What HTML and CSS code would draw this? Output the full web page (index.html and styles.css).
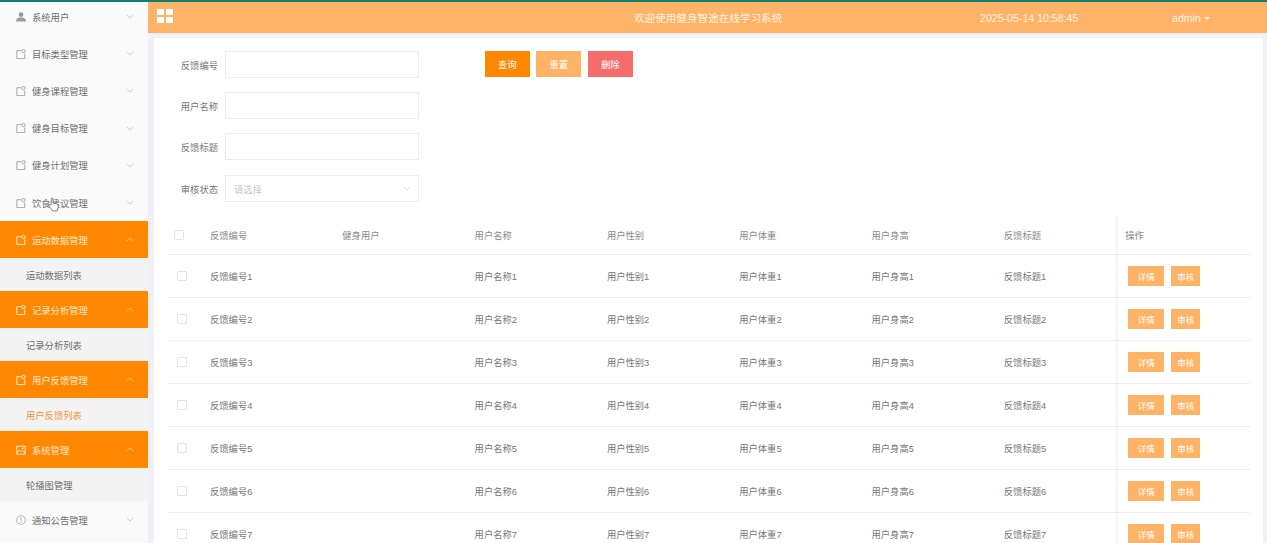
FILE: index.html
```html
<!DOCTYPE html>
<html lang="zh-CN">
<head>
    <meta charset="UTF-8">
    <title>用户反馈列表</title>
    <link rel="stylesheet" href="styles.css">
</head>
<body>
    <svg class="icon-defs" width="0" height="0">
        <symbol id="i-tag" viewBox="0 0 12 12">
            <path d="M6 2H1v9.500h9.500V5.500" fill="none" stroke="currentColor" stroke-width="1"/>
            <circle cx="9" cy="2.500" r="2" fill="none" stroke="currentColor" stroke-width="1"/>
        </symbol>
        <symbol id="i-down" viewBox="0 0 10 6">
            <path d="M1 1l4 4 4-4" fill="none" stroke="currentColor" stroke-width="0.800"/>
        </symbol>
        <symbol id="i-up" viewBox="0 0 10 6">
            <path d="M1 5l4-4 4 4" fill="none" stroke="currentColor" stroke-width="0.900"/>
        </symbol>
    </svg>

    <div class="app">
        <aside class="sidebar">
            <div class="menu-head">
                <svg class="menu-icon" viewBox="0 0 12 12"><circle cx="6" cy="3.200" r="2.800" fill="currentColor"/><path d="M0 11.500c0-3.500 2.500-4.800 6-4.800s6 1.300 6 4.800z" fill="currentColor"/></svg>
                <span>系统用户</span>
                <svg class="chev"><use href="#i-down"/></svg>
            </div>
            <div class="menu-head"><svg class="menu-icon"><use href="#i-tag"/></svg><span>目标类型管理</span><svg class="chev"><use href="#i-down"/></svg></div>
            <div class="menu-head"><svg class="menu-icon"><use href="#i-tag"/></svg><span>健身课程管理</span><svg class="chev"><use href="#i-down"/></svg></div>
            <div class="menu-head"><svg class="menu-icon"><use href="#i-tag"/></svg><span>健身目标管理</span><svg class="chev"><use href="#i-down"/></svg></div>
            <div class="menu-head"><svg class="menu-icon"><use href="#i-tag"/></svg><span>健身计划管理</span><svg class="chev"><use href="#i-down"/></svg></div>
            <div class="menu-head"><svg class="menu-icon"><use href="#i-tag"/></svg><span>饮食建议管理</span><svg class="chev"><use href="#i-down"/></svg></div>

            <div class="menu-head open"><svg class="menu-icon"><use href="#i-tag"/></svg><span>运动数据管理</span><svg class="chev"><use href="#i-up"/></svg></div>
            <div class="menu-sub">运动数据列表</div>
            <div class="menu-head open"><svg class="menu-icon"><use href="#i-tag"/></svg><span>记录分析管理</span><svg class="chev"><use href="#i-up"/></svg></div>
            <div class="menu-sub">记录分析列表</div>
            <div class="menu-head open"><svg class="menu-icon"><use href="#i-tag"/></svg><span>用户反馈管理</span><svg class="chev"><use href="#i-up"/></svg></div>
            <div class="menu-sub current">用户反馈列表</div>
            <div class="menu-head open">
                <svg class="menu-icon" viewBox="0 0 12 12"><rect x="1" y="1.500" width="10" height="9.500" fill="none" stroke="currentColor"/><path d="M1.500 9l2.500-3 2.500 2 1.500-1.500 3 2.500" fill="none" stroke="currentColor"/><circle cx="8" cy="4" r="1" fill="currentColor"/></svg>
                <span>系统管理</span>
                <svg class="chev"><use href="#i-up"/></svg>
            </div>
            <div class="menu-sub">轮播图管理</div>
            <div class="menu-head">
                <svg class="menu-icon" viewBox="0 0 12 12"><circle cx="6" cy="6" r="5.300" fill="none" stroke="currentColor" stroke-width="0.800"/><path d="M6 2.800v4M6 8v1.300" stroke="currentColor" stroke-width="0.900"/></svg>
                <span>通知公告管理</span>
                <svg class="chev"><use href="#i-down"/></svg>
            </div>
        </aside>

        <div class="main">
            <header class="topbar">
                <div class="grid-icon"><i></i><i></i><i></i><i></i></div>
                <div class="site-title">欢迎使用健身智途在线学习系统</div>
                <div class="clock">2025-05-14 10:58:45</div>
                <div class="user">admin <span class="caret"></span></div>
            </header>

            <div class="content">
                <div class="card">
                    <div class="search">
                        <form class="search-form">
                            <div class="form-group"><label>反馈编号</label><input type="text"></div>
                            <div class="form-group"><label>用户名称</label><input type="text"></div>
                            <div class="form-group"><label>反馈标题</label><input type="text"></div>
                            <div class="form-group form-group-select">
                                <label>审核状态</label>
                                <div class="select"><span>请选择</span><svg class="chev"><use href="#i-down"/></svg></div>
                            </div>
                        </form>
                        <div class="search-btns">
                            <button class="btn btn-query">查询</button>
                            <button class="btn btn-reset">重置</button>
                            <button class="btn btn-del">删除</button>
                        </div>
                    </div>

                    <div class="table-wrap">
                        <table class="data-table">
                            <thead>
                                <tr>
                                    <th class="col-check"><span class="check head-check"></span></th>
                                    <th>反馈编号</th><th>健身用户</th><th>用户名称</th><th>用户性别</th><th>用户体重</th><th>用户身高</th><th class="col-title">反馈标题</th>
                                    <th class="col-ops">操作</th>
                                </tr>
                            </thead>
                            <tbody>
                                <tr><td class="col-check"><span class="check"></span></td><td>反馈编号1</td><td></td><td>用户名称1</td><td>用户性别1</td><td>用户体重1</td><td>用户身高1</td><td>反馈标题1</td><td class="col-ops"><button class="mini">详情</button><button class="mini short">审核</button></td></tr>
                                <tr><td class="col-check"><span class="check"></span></td><td>反馈编号2</td><td></td><td>用户名称2</td><td>用户性别2</td><td>用户体重2</td><td>用户身高2</td><td>反馈标题2</td><td class="col-ops"><button class="mini">详情</button><button class="mini short">审核</button></td></tr>
                                <tr><td class="col-check"><span class="check"></span></td><td>反馈编号3</td><td></td><td>用户名称3</td><td>用户性别3</td><td>用户体重3</td><td>用户身高3</td><td>反馈标题3</td><td class="col-ops"><button class="mini">详情</button><button class="mini short">审核</button></td></tr>
                                <tr><td class="col-check"><span class="check"></span></td><td>反馈编号4</td><td></td><td>用户名称4</td><td>用户性别4</td><td>用户体重4</td><td>用户身高4</td><td>反馈标题4</td><td class="col-ops"><button class="mini">详情</button><button class="mini short">审核</button></td></tr>
                                <tr><td class="col-check"><span class="check"></span></td><td>反馈编号5</td><td></td><td>用户名称5</td><td>用户性别5</td><td>用户体重5</td><td>用户身高5</td><td>反馈标题5</td><td class="col-ops"><button class="mini">详情</button><button class="mini short">审核</button></td></tr>
                                <tr><td class="col-check"><span class="check"></span></td><td>反馈编号6</td><td></td><td>用户名称6</td><td>用户性别6</td><td>用户体重6</td><td>用户身高6</td><td>反馈标题6</td><td class="col-ops"><button class="mini">详情</button><button class="mini short">审核</button></td></tr>
                                <tr><td class="col-check"><span class="check"></span></td><td>反馈编号7</td><td></td><td>用户名称7</td><td>用户性别7</td><td>用户体重7</td><td>用户身高7</td><td>反馈标题7</td><td class="col-ops"><button class="mini">详情</button><button class="mini short">审核</button></td></tr>
                            </tbody>
                        </table>
                    </div>
                </div>
            </div>
        </div>
    </div>

    <svg class="hand-cursor" viewBox="0 0 12 16">
        <path d="M3.500 8V2a1 1 0 0 1 2 0v4.500l4 .8c1 .2 1.500.8 1.500 1.700v2.500L10 15H5L1 9.500c-.5-1 .8-1.800 1.500-1z" fill="#fff" stroke="#555" stroke-width="0.800"/>
    </svg>
</body>
</html>
```
FILE: styles.css
```css
* {
    margin: 0;
    padding: 0;
    box-sizing: border-box;
}

html, body {
    height: 100%;
    overflow: hidden;
}

body {
    font-family: "Liberation Sans", "Noto Sans CJK SC", sans-serif;
    font-size: 9.300px;
    color: #777;
    background: #f0f0f6;
}

.icon-defs {
    position: absolute;
}

.app {
    display: flex;
    height: 543px;
    border-top: 2px solid #0f7f70;
    overflow: hidden;
}

/* sidebar */
.sidebar {
    flex: 0 0 148px;
    background: #fafafa;
    margin-top: -4px;
}

.menu-head {
    display: flex;
    align-items: center;
    height: 37.200px;
    padding-left: 16px;
    color: #6f6f6f;
}

.menu-head span {
    margin-left: 6px;
    flex: 1;
}

.menu-icon {
    width: 10px;
    height: 10px;
    color: #999;
}

.chev {
    width: 8px;
    height: 5px;
    color: #b5b5b5;
    margin-right: 14px;
}

.menu-head.open {
    background: #ff8800;
    color: #ffe9d0;
}

.menu-head.open .menu-icon {
    color: #fff;
}

.menu-head.open .chev {
    color: #ffe0bb;
}

.menu-sub {
    height: 32.800px;
    line-height: 36px;
    padding-left: 26px;
    background: #f3f3f3;
    color: #6f6f6f;
}

.menu-sub.current {
    color: #f5923a;
}

/* top bar */
.main {
    flex: 1;
    min-width: 0;
}

.topbar {
    display: flex;
    align-items: center;
    height: 31px;
    background: #ffb366;
    color: #fff3e4;
    font-size: 10.600px;
}

.grid-icon {
    display: grid;
    grid-template-columns: 7px 7px;
    grid-auto-rows: 6px;
    gap: 2px;
    margin-left: 9px;
    margin-top: -4px;
}

.grid-icon i {
    background: #fff;
}

.site-title {
    margin-left: 461px;
    width: 149px;
    white-space: nowrap;
}

.clock {
    margin-left: 197px;
    width: 192px;
}

.user {
    font-size: 10.600px;
}

.caret {
    display: inline-block;
    border: 3px solid transparent;
    border-top-color: #fff3e4;
    border-bottom: 0;
    vertical-align: middle;
}

/* content */
.content {
    padding: 5px 4px 0 6px;
}

.card {
    background: #fff;
    padding: 13px 13px 0;
    height: 510px;
    overflow: hidden;
}

.search {
    display: flex;
    align-items: flex-start;
}

.search-form {
    display: flex;
    flex-direction: column;
    gap: 14px;
}

.form-group {
    display: flex;
    align-items: center;
    gap: 7px;
}

.form-group-select {
    margin-top: 1px;
}

.form-group label {
    width: 51px;
    text-align: right;
}

.form-group input,
.select {
    width: 194px;
    height: 27px;
    border: 1px solid #ececf0;
    background: #fff;
}

.select {
    display: flex;
    align-items: center;
    justify-content: space-between;
    padding-left: 8px;
    color: #c4c6cc;
}

.select .chev {
    margin-right: 7px;
    color: #c8c8c8;
}

.search-btns {
    display: flex;
    gap: 6.500px;
    margin-left: 65.700px;
}

.btn {
    width: 45px;
    height: 26px;
    border: none;
    color: #fff;
    font: inherit;
}

.btn-query { background: #ff8800; }
.btn-reset { background: #ffb366; }
.btn-del { background: #f56c6c; }

/* table */
.table-wrap {
    position: relative;
    margin-top: 14px;
}

.table-wrap::after {
    content: "";
    position: absolute;
    top: 0;
    bottom: 0;
    right: 132px;
    width: 4px;
    background: linear-gradient(to right, rgba(0,0,0,0), rgba(0,0,0,0.05));
}

.data-table {
    width: 1083px;
    border-collapse: collapse;
    table-layout: fixed;
}

.data-table th,
.data-table td {
    text-align: left;
    font-weight: normal;
    width: 132.300px;
    border-bottom: 1px solid #eeeff2;
}

.data-table th {
    height: 38px;
    color: #8a8a8a;
}

.data-table td {
    height: 43px;
    color: #777;
}

.data-table .col-check {
    width: 43px;
    padding-left: 10px;
}

.data-table .col-title {
    width: 114.500px;
}

.data-table .col-ops {
    width: 131.700px;
    padding-left: 7px;
}

.check {
    display: block;
    width: 10px;
    height: 10px;
    border: 1px solid #e4e4e8;
    border-radius: 1px;
}

.head-check {
    margin-left: -3px;
}

.mini {
    width: 36px;
    height: 20px;
    border: none;
    background: #ffb366;
    color: #fff;
    font: inherit;
    font-size: 8.500px;
    margin-left: 3px;
    margin-right: 7px;
    vertical-align: middle;
}

.mini.short {
    width: 29px;
    margin: 0;
}

.hand-cursor {
    position: absolute;
    left: 48px;
    top: 197px;
    width: 11px;
    height: 15px;
}
```
